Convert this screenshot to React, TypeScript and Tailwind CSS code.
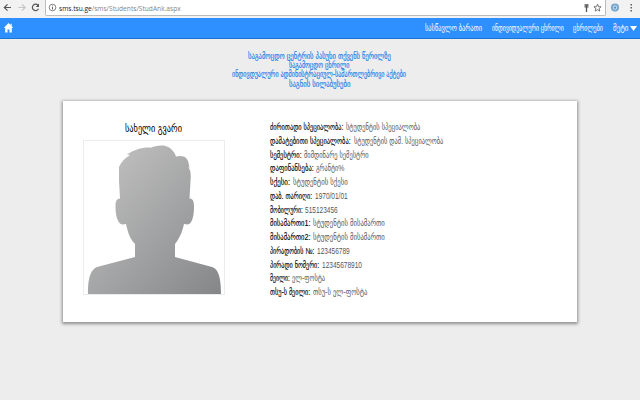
import React, { useLayoutEffect, useRef, useState } from "react";

const links: [string, number][] = [
  ["საგამოცდო ცენტრის პასუხი თქვენს წერილზე", 143],
  ["საგამოცდო ცხრილი", 60.5],
  ["ინდივდუალური ადმინისტრაციულ-სამართლებრივი აქტები", 174],
  ["საგნის სილაბუსები", 61],
];

const fields: [string, number, string, number][] = [
  ["ძირითადი სპეციალობა:", 73.5, "სტუდენტის სპეციალობა", 74],
  ["დამატებითი სპეციალობა:", 81, "სტუდენტის დამ. სპეციალობა", 89],
  ["სემესტრი:", 31.5, "მიმდინარე სემესტრი", 64.5],
  ["დაფინანსება:", 43.5, "გრანტი%", 28.5],
  ["სქესი:", 20, "სტუდენტის სქესი", 54.5],
  ["დაბ. თარიღი:", 42, "1970/01/01", 33],
  ["მობილური:", 32.5, "515123456", 33],
  ["მისამართი1:", 40.5, "სტუდენტის მისამართი", 71.5],
  ["მისამართი2:", 40.5, "სტუდენტის მისამართი", 71.5],
  ["პირადობის №:", 44.5, "123456789", 33],
  ["პირადი ნომერი:", 49.5, "12345678910", 40],
  ["მეილი:", 19.5, "ელ-ფოსტა", 33],
  ["თსუ-ს მეილი:", 40.5, "თსუ-ს ელ-ფოსტა", 54],
];

// Condenses a single line of text horizontally to a given width.
function Fit({ width, children }: { width: number; children: React.ReactNode }) {
  const ref = useRef<HTMLSpanElement>(null);
  const [scale, setScale] = useState(1);
  useLayoutEffect(() => {
    if (ref.current) setScale(width / ref.current.offsetWidth);
  }, [width]);
  return (
    <span className="inline-flex shrink-0 justify-start" style={{ width }}>
      <span ref={ref} className="inline-block shrink-0 origin-left whitespace-nowrap" style={{ transform: `scaleX(${scale})` }}>
        {children}
      </span>
    </span>
  );
}

function BrowserBar() {
  return (
    <div className="flex h-[18px] items-start bg-[#f2f2f2]">
      <svg className="h-[17px] w-[45px] shrink-0" viewBox="0 0 45 17" fill="none" strokeWidth="1.2">
        <path d="M11 7.500H4.500M7.500 4.300 4.300 7.500l3.200 3.200" stroke="#555" />
        <path d="M18.500 7.500H25M22 4.300l3.200 3.200-3.200 3.200" stroke="#c4c4c4" />
        <path d="M38 5.300A3.200 3.200 0 1 0 38.500 8.700" stroke="#555" />
        <path d="M39 3.600v3.300h-3.300z" fill="#555" />
      </svg>
      <div className="flex h-4 w-[561px] shrink-0 items-center rounded-b-[2px] border border-t-0 border-[#bcbcbc] bg-white">
        <svg className="ml-[2px] h-[9px] w-[9px]" viewBox="0 0 9 9" fill="none" stroke="#666">
          <circle cx="4.5" cy="4.5" r="3.3" strokeWidth=".8" />
          <path d="M4.500 4v2.500M4.500 2.400v.9" />
        </svg>
        <span className="ml-[2px] flex font-['Open_Sans','Noto_Sans',sans-serif] text-[8px] text-[#858585]">
          <Fit width={121.5}>
            <span className="text-[#222]">sms.tsu.ge</span>/sms/Students/StudAnk.aspx
          </Fit>
        </span>
        <svg className="ml-auto h-4 w-[24px]" viewBox="0 0 24 16" fill="none" stroke="#555">
          <path d="M3.500 5h4M3.500 6.800h4M5.500 5v7" strokeWidth="1.300" />
          <path d="m16.500 4.200 1 2.500 2.600.1-2 1.700.7 2.600-2.300-1.400-2.300 1.400.7-2.600-2-1.700 2.600-.1z" strokeWidth=".8" />
        </svg>
      </div>
      <svg className="h-4 w-[34px]" viewBox="0 0 34 16">
        <circle cx="9" cy="7.600" r="3.100" fill="#d8e6ef" stroke="#79a9cf" strokeWidth="2" />
        <circle cx="9" cy="7.600" r="1.200" fill="#5590c0" />
        <path d="M24.500 4h1.400v1.400h-1.400zM24.500 7h1.400v1.400h-1.400zM24.500 10h1.400v1.400h-1.400z" fill="#555" />
      </svg>
    </div>
  );
}

function NavBar() {
  return (
    <div className="flex h-[21px] items-center border-b border-[#1b75d0] bg-[#2e8fff] pr-[3px] pl-[3px] text-[8.500px] text-white">
      <svg className="mb-px h-3 w-3" viewBox="0 0 12 12" fill="#fff">
        <path d="M5.500 1 .8 6h1.400v4.600h2.300V7.400h2v3.200h2.300V6h1.400L8.700 4.300V1.800H7.600v1.300z" />
      </svg>
      <div className="ml-auto flex items-center gap-[10px] pt-px whitespace-nowrap">
        <Fit width={57}>სასწავლო ბარათი</Fit>
        <Fit width={71.5}>ინდივიდუალური ცხრილი</Fit>
        <Fit width={29.5}>ცხრილები</Fit>
        <span className="flex items-center gap-[2px]">
          <Fit width={15.5}>მეტი</Fit>
          <svg className="h-[5px] w-[7px]" viewBox="0 0 7 5" fill="#fff"><path d="M0 0h7L3.500 5z" /></svg>
        </span>
      </div>
    </div>
  );
}

function Portrait() {
  return (
    <svg className="h-[155px] w-[142px]" viewBox="83 140 142 155">
      <defs>
        <linearGradient id="shade" x1="0" y1="0" x2="1" y2="1">
          <stop offset="0" stopColor="#c6c6c6" />
          <stop offset="1" stopColor="#858688" />
        </linearGradient>
      </defs>
      <rect x="83.500" y="140.500" width="141" height="154" fill="#fff" stroke="#ececec" />
      <path
        fill="url(#shade)"
        d="M119 167C121 162 125 158 130 155L127 154.500C134 150 140 147.300 151 147.500L149.500 148.500C154 145.800 159 145.300 164 145.600C170 147 174 151 176 156.500C183 154.500 188 157.500 188.500 163L189.500 168 188 167C191 170 191 175 190.500 181L189.500 198.500C193.500 199 194 202 194 207C194 215 192.500 224 187.500 224.500L184 224C182 233 179 239 175 244V257L212 267C218 269 221 276 221 294H88C88 276 91 270 97 267L135 257V244C130 239 128 233 126 224L122.500 224.500C117.500 224 115.500 215 115.500 207C115.500 202 116 199 120 198.500L119 181Z"
      />
    </svg>
  );
}

export default function App() {
  return (
    <div className="h-[400px] w-[640px] overflow-hidden bg-[#ededed] font-['Liberation_Sans','DejaVu_Sans_Condensed','DejaVu_Sans',sans-serif]">
      <BrowserBar />
      <NavBar />
      <div className="flex flex-col items-center pt-[12.800px] pr-[2px] text-[8.500px] leading-[9.300px] whitespace-nowrap text-[#1b80ea] [-webkit-text-stroke:0.15px_#1b80ea]">
        {links.map(([text, width]) => (
          <a key={text} className="flex h-[9.300px]"><Fit width={width}>{text}</Fit></a>
        ))}
      </div>
      <div className="mt-[12px] ml-[63px] flex h-[221px] w-[514px] bg-white pl-5 shadow-[0_1px_3px_1px_rgba(0,0,0,0.4)]">
        <div className="flex w-[142px] flex-col items-center">
          <h1 className="mt-[20px] mr-[2px] flex h-[19px] shrink-0 text-[11px] leading-[15px] text-black">
            <Fit width={57}>სახელი გვარი</Fit>
          </h1>
          <Portrait />
        </div>
        <div className="ml-[45px] pt-[20px] text-[8.500px] leading-[13.770px] whitespace-nowrap text-[#555]">
          {fields.map(([label, labelWidth, value, valueWidth]) => (
            <div key={label} className="flex h-[13.770px] gap-[2.500px]">
              <span className="flex text-black [-webkit-text-stroke:0.1px_black]">
                <Fit width={labelWidth}>{label}</Fit>
              </span>
              <Fit width={valueWidth}>{value}</Fit>
            </div>
          ))}
        </div>
      </div>
    </div>
  );
}
